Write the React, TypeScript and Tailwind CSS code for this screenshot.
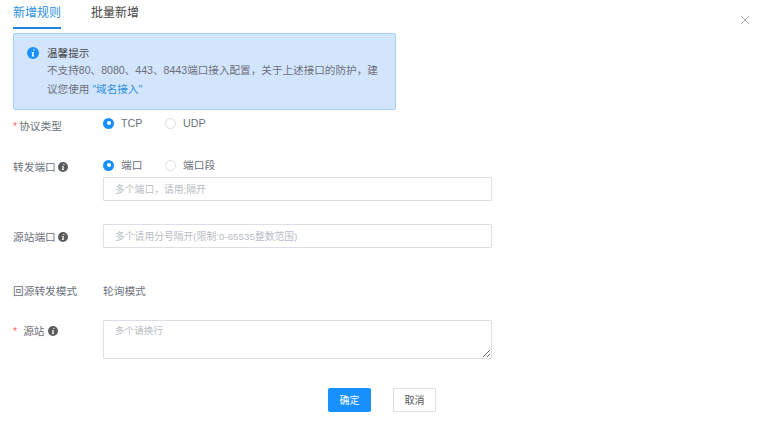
const font = { fontFamily: '"Liberation Sans", "Noto Sans CJK SC", sans-serif' };

function Radio({ checked, label }: { checked?: boolean; label: string }) {
  return (
    <label className="flex w-[62px] items-center gap-[7px] text-[10.7px] leading-[14px] text-[#6c707a]">
      {checked ? (
        <span className="flex h-[11px] w-[11px] items-center justify-center rounded-full bg-[#1890ff]">
          <span className="h-[4px] w-[4px] rounded-full bg-white" />
        </span>
      ) : (
        <span className="h-[11px] w-[11px] rounded-full border border-[#dcdfe6] bg-white" />
      )}
      {label}
    </label>
  );
}

function Tip() {
  return (
    <svg width="10" height="10" viewBox="0 0 11 11" className="shrink-0">
      <circle cx="5.5" cy="5.5" r="5.5" fill="#5c5c5c" />
      <path d="M5.9 2.2h1.1v1.1H5.7zM4.5 4.6h2L5.9 7.9h.7v.8H4.4l.6-3.3h-.6z" fill="#fff" />
    </svg>
  );
}

function Label({ children, star }: { children: React.ReactNode; star?: boolean }) {
  return (
    <div className="flex w-[90px] shrink-0 items-center text-[10.7px] leading-[14px] text-[#6c707a]">
      {star && <span className="mr-[2px] text-[#f56c6c]">*</span>}
      {children}
    </div>
  );
}

const inputCls =
  "block h-[24px] w-[389px] rounded-[1px] border border-[#dcdfe6] px-[11px] text-[9.8px] text-[#666] outline-none placeholder:text-[#b9bcc4]";

export default function App() {
  return (
    <div className="relative h-[426px] w-[766px] overflow-hidden bg-white" style={font}>
      <button className="absolute right-[17px] top-[16px] text-[#a8abb2]">
        <svg width="8" height="8" viewBox="0 0 8 8" className="block">
          <path d="M0 0l8 8M8 0L0 8" stroke="currentColor" strokeWidth="1" fill="none" />
        </svg>
      </button>

      <div className="flex h-[29px] gap-[30px] pl-[13px]">
        <div className="h-[29px] w-[48px] border-b-2 border-[#2284dc] pt-[6px] text-[12px] leading-[14px] text-[#2c8fe3]">
          新增规则
        </div>
        <div className="pt-[6px] text-[12px] leading-[14px] text-[#444]">批量新增</div>
      </div>

      <div className="ml-[13px] mt-[4px] flex h-[77px] w-[383px] gap-[8px] rounded-[2px] border border-[#a5d2fa] bg-[#d3e5fd] pl-[13px] pt-[12px]">
        <svg width="12" height="12" viewBox="0 0 12 12" className="mt-[1px] shrink-0">
          <circle cx="6" cy="6" r="6" fill="#1890ff" />
          <path d="M6.5 2.2h1.2v1.3H6.3zM4.8 5h2.3l-.7 3.6h.9v.9H4.7l.7-3.6h-.7z" fill="#fff" />
        </svg>
        <div className="text-[10.6px] text-[#6c707a]">
          <div className="h-[15px] leading-[15px] text-[#444]">温馨提示</div>
          <div className="w-[336px] leading-[19px]">
            不支持80、8080、443、8443端口接入配置，关于上述接口的防护，建议您使用{" "}
            <span className="text-[#2c8fe3]">"域名接入"</span>
          </div>
        </div>
      </div>

      <div className="ml-[13px] mt-[5px] flex h-[20px] items-center">
        <div className="mt-[1px]">
          <Label star>协议类型</Label>
        </div>
        <div className="mb-[4px] flex">
          <Radio checked label="TCP" />
          <Radio label="UDP" />
        </div>
      </div>

      <div className="ml-[13px] mt-[23px] flex items-start">
        <div className="mt-[2px]">
          <Label>
            转发端口
            <span className="ml-[2px]">
              <Tip />
            </span>
          </Label>
        </div>
        <div>
          <div className="flex">
            <Radio checked label="端口" />
            <Radio label="端口段" />
          </div>
          <input className={`${inputCls} mt-[5px]`} placeholder="多个端口，请用;隔开" />
        </div>
      </div>

      <div className="ml-[13px] mt-[23px] flex items-center">
        <div className="mt-[2px]">
          <Label>
            源站端口
            <span className="ml-[2px]">
              <Tip />
            </span>
          </Label>
        </div>
        <input className={inputCls} placeholder="多个请用分号隔开(限制:0-65535整数范围)" />
      </div>

      <div className="ml-[13px] mt-[36px] flex items-center text-[10.7px] leading-[14px] text-[#6c707a]">
        <Label>回源转发模式</Label>
        <span>轮询模式</span>
      </div>

      <div className="ml-[13px] mt-[22px] flex items-start">
        <div className="mt-[4px]">
          <Label star>
            <span className="ml-[4px]">源站</span>
            <span className="ml-[3px]">
              <Tip />
            </span>
          </Label>
        </div>
        <textarea
          className="block h-[39px] w-[389px] resize-y rounded-[1px] border border-[#dcdfe6] px-[11px] py-[3px] text-[9.6px] text-[#666] outline-none placeholder:text-[#b9bcc4]"
          placeholder="多个请换行"
        />
      </div>

      <div className="ml-[328px] mt-[29px] flex gap-[22px]">
        <button className="h-[24px] w-[43px] rounded-[2px] bg-[#1890ff] text-[10px] text-white">确定</button>
        <button className="h-[24px] w-[43px] rounded-[1px] border border-[#dcdfe6] bg-white text-[10px] text-[#555]">
          取消
        </button>
      </div>
    </div>
  );
}
